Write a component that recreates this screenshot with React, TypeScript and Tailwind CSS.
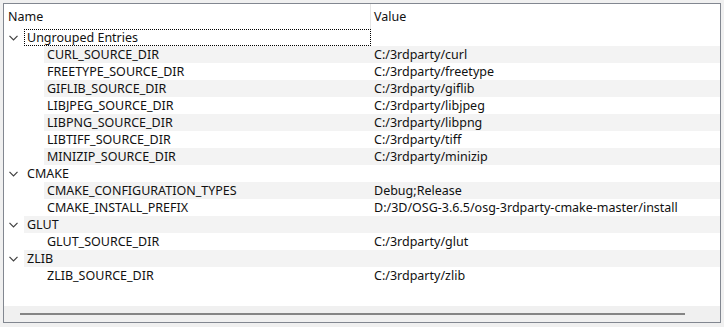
import React from 'react';

type Entry = { name: string; value: string };
type Group = { title: string; focused?: boolean; entries: Entry[] };

const groups: Group[] = [
  {
    title: 'Ungrouped Entries',
    focused: true,
    entries: [
      { name: 'CURL_SOURCE_DIR', value: 'C:/3rdparty/curl' },
      { name: 'FREETYPE_SOURCE_DIR', value: 'C:/3rdparty/freetype' },
      { name: 'GIFLIB_SOURCE_DIR', value: 'C:/3rdparty/giflib' },
      { name: 'LIBJPEG_SOURCE_DIR', value: 'C:/3rdparty/libjpeg' },
      { name: 'LIBPNG_SOURCE_DIR', value: 'C:/3rdparty/libpng' },
      { name: 'LIBTIFF_SOURCE_DIR', value: 'C:/3rdparty/tiff' },
      { name: 'MINIZIP_SOURCE_DIR', value: 'C:/3rdparty/minizip' },
    ],
  },
  {
    title: 'CMAKE',
    entries: [
      { name: 'CMAKE_CONFIGURATION_TYPES', value: 'Debug;Release' },
      { name: 'CMAKE_INSTALL_PREFIX', value: 'D:/3D/OSG-3.6.5/osg-3rdparty-cmake-master/install' },
    ],
  },
  {
    title: 'GLUT',
    entries: [{ name: 'GLUT_SOURCE_DIR', value: 'C:/3rdparty/glut' }],
  },
  {
    title: 'ZLIB',
    entries: [{ name: 'ZLIB_SOURCE_DIR', value: 'C:/3rdparty/zlib' }],
  },
];

const Chevron = () => (
  <svg width="9" height="6" viewBox="0 0 9 6" className="ml-[5px]">
    <path d="M0.5 0.8 L4.5 4.8 L8.5 0.8" fill="none" stroke="#404040" strokeWidth="1.2" />
  </svg>
);

type Row = { kind: 'group' | 'entry'; name: string; value: string; focused?: boolean };

const rows: Row[] = groups.flatMap((g) => [
  { kind: 'group' as const, name: g.title, value: '', focused: g.focused },
  ...g.entries.map((e) => ({ kind: 'entry' as const, name: e.name, value: e.value })),
]);

export default function App() {
  return (
    <div
      className="w-[724px] h-[327px] bg-[#f0f0f0] pt-[3px] pl-[3px] text-[12.5px] text-[#111]"
      style={{ fontFamily: '"Noto Sans", "Liberation Sans", sans-serif' }}
    >
      <div className="w-[718px] h-[320px] border border-[#828790] bg-white flex flex-col">
        {/* header */}
        <div className="h-[25px] flex shrink-0">
          <div className="w-[366px] pl-[4px] pt-[4px] leading-[17px]">Name</div>
          <div className="w-px bg-[#e5e5e5]" />
          <div className="flex-1 pl-[3px] pt-[4px] leading-[17px]">Value</div>
        </div>

        {rows.map((row, i) => {
          const striped = i % 2 === 1;
          const isGroup = row.kind === 'group';
          return (
            <div key={i} className="h-[17px] flex shrink-0">
              <div className={`${isGroup ? 'w-[20px]' : 'w-[40px]'} flex items-center shrink-0`}>
                {isGroup && <Chevron />}
              </div>
              <div className={`flex flex-1 ${striped ? 'bg-[#f3f3f3]' : ''}`}>
                <div
                  className={`${isGroup ? 'w-[347px]' : 'w-[327px]'} pl-[3px] pt-[1px] leading-[16px] whitespace-nowrap ${
                    row.focused ? 'outline outline-1 outline-dotted outline-black -outline-offset-1' : ''
                  }`}
                >
                  {row.name}
                </div>
                <div className="flex-1 pl-[3px] pt-[1px] leading-[16px] whitespace-nowrap">{row.value}</div>
              </div>
            </div>
          );
        })}

        <div className="flex-1" />

        {/* horizontal scrollbar */}
        <div className="h-[16px] bg-[#f0f0f0] shrink-0 flex items-center">
          <div className="ml-[16px] w-[665px] h-[2px] bg-[#858585]" />
        </div>
      </div>
    </div>
  );
}
